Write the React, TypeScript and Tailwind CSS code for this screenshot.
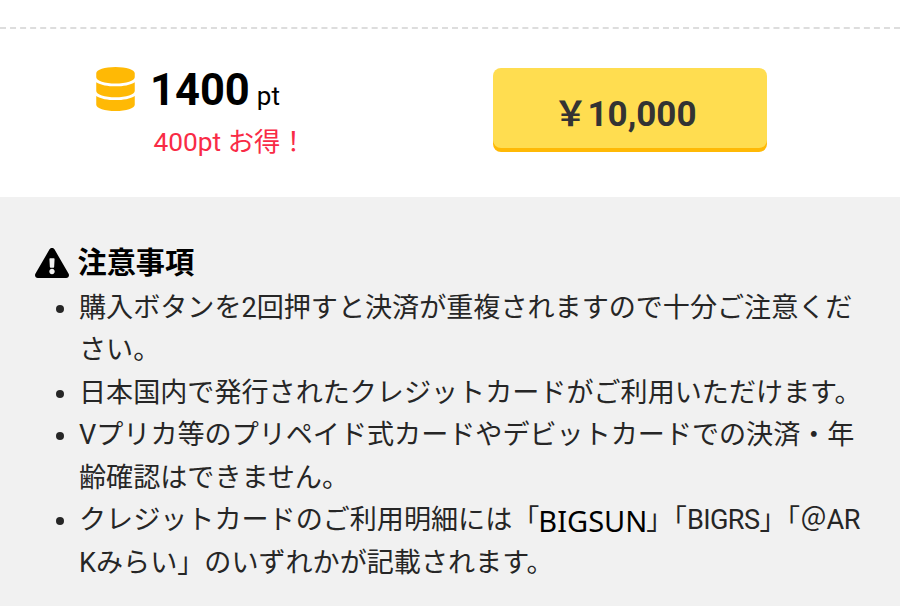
import { FaDatabase, FaExclamationTriangle } from "react-icons/fa";

const notes = [
  ["購入ボタンを2回押すと決済が重複されますので十分ご注意くだ", "さい。"],
  ["日本国内で発行されたクレジットカードがご利用いただけます。"],
  ["Vプリカ等のプリペイド式カードやデビットカードでの決済・年", "齢確認はできません。"],
];

export default function App() {
  return (
    <div className="h-[606px] w-[900px] overflow-hidden bg-white font-[Roboto,'Noto_Sans_CJK_JP',sans-serif] text-[#262626]">
      <div className="h-[29px] border-b-2 border-dashed border-[#ddd]" />
      <section className="flex h-[168px] items-start">
        <div className="w-[493px] pt-[35px] pl-24">
          <div className="flex h-[50px] items-center">
            <FaDatabase className="h-[44px] w-[39px] text-[#ffb905]" />
            <span className="mt-[3px] ml-[15px] text-[43.5px] leading-none font-bold text-black">1400</span>
            <span className="mt-[13px] ml-[7px] text-[26px] leading-none text-black">pt</span>
          </div>
          <p className="mt-[9px] pl-[57.5px] text-[26.3px] leading-[38px] whitespace-nowrap text-[#f92b46]">400pt お得！</p>
        </div>
        <button className="mt-[39px] h-[80px] w-[274px] rounded-lg bg-[#ffdd50] pt-[12px] pr-[10px] text-[35px] leading-none font-bold text-[#333] shadow-[0_4px_0_#ffb905]">
          <span className="text-[34px] font-semibold">￥</span>10,000
        </button>
      </section>
      <section className="h-[409px] bg-[#f1f1f1] pt-[43px] pl-[35px]">
        <h2 className="flex h-[46px] items-center gap-[8.5px] text-[29.2px] text-black">
          <FaExclamationTriangle className="-mt-px size-[34px]" />
          <span className="mt-0.5 font-bold">注意事項</span>
        </h2>
        <ul className="list-disc pt-[0.5px] pl-[44px] text-[27.08px] leading-[42.5px] whitespace-nowrap">
          {notes.map((lines) => (
            <li key={lines[0]}>
              {lines.map((line) => (
                <div key={line}>{line}</div>
              ))}
            </li>
          ))}
          <li>
            <div>
              クレジットカードのご利用明細には「
              <span className="relative top-[3px] -ml-px inline-block font-['Noto_Sans'] text-[29px] leading-none text-black">
                BIGSUN
              </span>
              <span className="-ml-px">」「</span>
              <span className="tracking-[-0.6px]">BIGRS</span>」「
              <span className="tracking-[-0.5px]">＠AR</span>
            </div>
            <div>Kみらい」のいずれかが記載されます。</div>
          </li>
        </ul>
      </section>
    </div>
  );
}
